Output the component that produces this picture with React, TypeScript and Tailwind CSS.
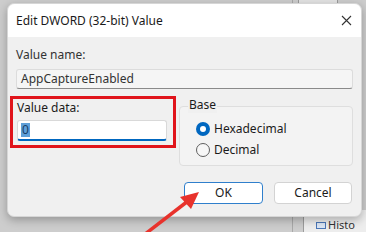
import React from "react";

function Radio({ checked, label }: { checked: boolean; label: string }) {
  return (
    <div className="flex items-center gap-[4px] h-[21px]">
      {checked ? (
        <span className="w-[14px] h-[14px] rounded-full bg-[#0067c0] flex items-center justify-center">
          <span className="w-[6px] h-[6px] rounded-full bg-white" />
        </span>
      ) : (
        <span className="w-[14px] h-[14px] rounded-full border border-[#5f5f5f] bg-[#f7f7f7]" />
      )}
      <span className="text-[12px] text-[#1b1b1b]">{label}</span>
    </div>
  );
}

export default function App() {
  return (
    <div
      className="relative w-[366px] h-[232px] overflow-hidden bg-[#cdcdcd]"
      style={{ fontFamily: '"Noto Sans", "Open Sans", sans-serif' }}
    >
      {/* desktop behind the dialog */}
      <div className="absolute left-[292px] top-0 w-[1px] h-[232px] bg-[#a9a9a9]" />
      <div className="absolute left-[303px] top-[210px] w-[63px] h-[22px] bg-[#ededed] border-l border-[#9c9c9c]">
        <div className="flex items-center gap-[2px] pl-[12px] pt-[9px]">
          <span className="w-[10px] h-[7px] border border-[#4a76b8] bg-[#dbe6f5]" />
          <span className="text-[11px] leading-[12px] text-[#333]">Histo</span>
        </div>
      </div>
      <div className="absolute left-[298px] top-0 w-[40px] h-[3px] border-x border-[#9a9a9a] bg-[#e4e4e4]" />

      {/* dialog */}
      <div className="relative ml-[7px] mt-[3px] w-[355px] h-[214px] rounded-[7px] bg-[#f0f0f0] shadow-[0_3px_10px_rgba(0,0,0,0.28)] border border-[#d6d6d6]">
        <div className="h-[33px] bg-white rounded-t-[7px] flex items-center justify-between pl-[8px] pr-[9px]">
          <span className="text-[12px] text-[#1a1a1a]">Edit DWORD (32-bit) Value</span>
          <svg width="11" height="11" viewBox="0 0 11 11">
            <path d="M1 1 L10 10 M10 1 L1 10" stroke="#333" strokeWidth="1.1" />
          </svg>
        </div>

        <div className="px-[8px]">
          <div className="mt-[10px] text-[12px] leading-[16px] text-[#333]">Value name:</div>
          <div className="mt-[6px] h-[20px] rounded-[3px] border border-[#dcdcdc] border-b-[#8a8a8a] bg-[#f5f5f5] pl-[4px] text-[12px] leading-[18px] text-[#333]">
            AppCaptureEnabled
          </div>

          <div className="mt-[11px] flex">
            <div className="w-[163px] pl-[1px]">
              <div className="text-[12px] leading-[16px] text-[#1b1b1b]">Value data:</div>
              <div className="mt-[4px] w-[150px] h-[21px] rounded-[3px] border border-[#d9d9d9] border-b-2 border-b-[#0067c0] bg-white pl-[3px] flex items-center">
                <span className="bg-[#5d9fd8] text-[#183d66] text-[12px] leading-[14px] px-[1px]">0</span>
              </div>
            </div>

            <div className="relative ml-[1px] mt-[6px] w-[175px] h-[60px] rounded-[4px] border border-[#dedede] bg-[#f3f3f3] pl-[16px] pt-[11px]">
              <span className="absolute left-[8px] top-[-10px] px-[1px] bg-[#f0f0f0] text-[12px] leading-[16px] text-[#1b1b1b]">
                Base
              </span>
              <Radio checked label="Hexadecimal" />
              <Radio checked={false} label="Decimal" />
            </div>
          </div>

          <div className="mt-[16px] flex justify-end gap-[11px] pr-[1px]">
            <button className="w-[79px] h-[22px] rounded-[4px] border border-[#2f7fcc] bg-white text-[12px] text-[#1b1b1b]">
              OK
            </button>
            <button className="w-[78px] h-[22px] rounded-[4px] border border-[#d3d3d3] bg-white text-[12px] text-[#1b1b1b]">
              Cancel
            </button>
          </div>
        </div>

        {/* red highlight box */}
        <div className="absolute left-[2px] top-[92px] w-[166px] h-[52px] border-[3px] border-[#e0141b]" />
      </div>

      {/* red arrow */}
      <svg className="absolute left-0 top-0" width="366" height="232" viewBox="0 0 366 232">
        <line x1="140" y1="238" x2="188" y2="201" stroke="#e8322c" strokeWidth="3.5" />
        <polygon points="199,192 180,197 191,209" fill="#e8322c" />
      </svg>
    </div>
  );
}
